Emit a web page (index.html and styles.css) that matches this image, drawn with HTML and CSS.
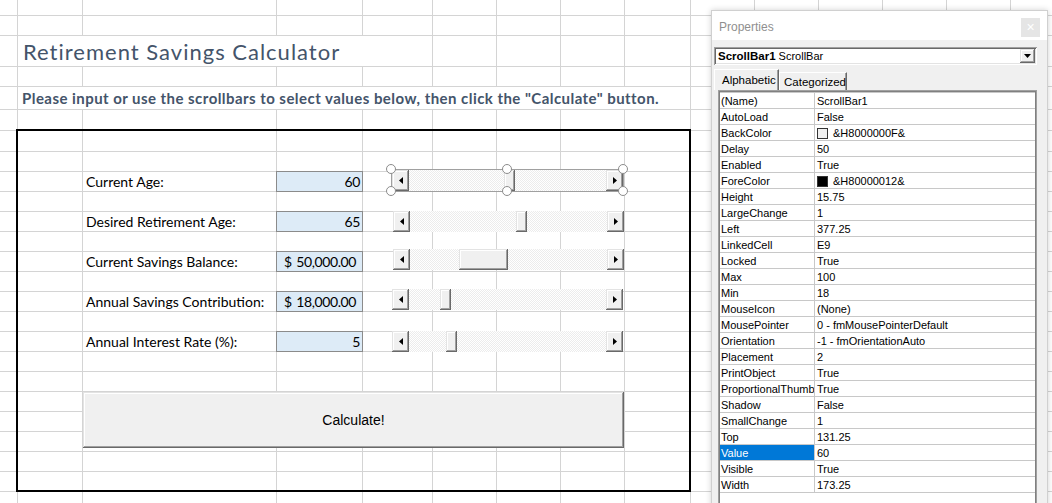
FILE: index.html
```html
<!DOCTYPE html>
<html lang="en">
<head>
<meta charset="utf-8">
<title>Retirement Savings Calculator</title>
<link rel="stylesheet" href="styles.css">
</head>
<body>
<div class="sheet">
  <h1 class="title">Retirement Savings Calculator</h1>
  <p class="instructions">Please input or use the scrollbars to select values below, then click the "Calculate" button.</p>
  <div class="frame"></div>

  <div class="label row-a">Current Age:</div>
  <div class="value row-a">60</div>
  <div class="label row-b">Desired Retirement Age:</div>
  <div class="value row-b">65</div>
  <div class="label row-c">Current Savings Balance:</div>
  <div class="value money row-c"><span>$</span><span>50,000.00</span></div>
  <div class="label row-d">Annual Savings Contribution:</div>
  <div class="value money row-d"><span>$</span><span>18,000.00</span></div>
  <div class="label row-e">Annual Interest Rate (%):</div>
  <div class="value row-e">5</div>

  <div class="sb sb-a selected">
    <div class="sb-btn"><svg width="4" height="7" viewBox="0 0 4 7"><path d="M4 0V7L0 3.5Z"/></svg></div>
    <div class="sb-track"><div class="sb-thumb" style="margin-left:95px"></div></div>
    <div class="sb-btn"><svg width="4" height="7" viewBox="0 0 4 7"><path d="M0 0V7L4 3.5Z"/></svg></div>
    <span class="handle h-tl"></span><span class="handle h-bl"></span>
    <span class="handle h-tm"></span><span class="handle h-bm"></span>
    <span class="handle h-tr"></span><span class="handle h-br"></span>
  </div>
  <div class="sb sb-b">
    <div class="sb-btn"><svg width="4" height="7" viewBox="0 0 4 7"><path d="M4 0V7L0 3.5Z"/></svg></div>
    <div class="sb-track"><div class="sb-thumb" style="margin-left:106px"></div></div>
    <div class="sb-btn"><svg width="4" height="7" viewBox="0 0 4 7"><path d="M0 0V7L4 3.5Z"/></svg></div>
  </div>
  <div class="sb sb-c">
    <div class="sb-btn"><svg width="4" height="7" viewBox="0 0 4 7"><path d="M4 0V7L0 3.5Z"/></svg></div>
    <div class="sb-track"><div class="sb-thumb wide" style="margin-left:49px"></div></div>
    <div class="sb-btn"><svg width="4" height="7" viewBox="0 0 4 7"><path d="M0 0V7L4 3.5Z"/></svg></div>
  </div>
  <div class="sb sb-d">
    <div class="sb-btn"><svg width="4" height="7" viewBox="0 0 4 7"><path d="M4 0V7L0 3.5Z"/></svg></div>
    <div class="sb-track"><div class="sb-thumb" style="margin-left:31px"></div></div>
    <div class="sb-btn"><svg width="4" height="7" viewBox="0 0 4 7"><path d="M0 0V7L4 3.5Z"/></svg></div>
  </div>
  <div class="sb sb-e">
    <div class="sb-btn"><svg width="4" height="7" viewBox="0 0 4 7"><path d="M4 0V7L0 3.5Z"/></svg></div>
    <div class="sb-track"><div class="sb-thumb" style="margin-left:37px"></div></div>
    <div class="sb-btn"><svg width="4" height="7" viewBox="0 0 4 7"><path d="M0 0V7L4 3.5Z"/></svg></div>
  </div>

  <button class="calc" type="button">Calculate!</button>

  <aside class="props">
    <header class="props-title">
      <span>Properties</span>
      <span class="close">×</span>
    </header>
    <div class="props-body">
      <div class="combo">
        <span class="combo-text"><b>ScrollBar1</b> ScrollBar</span>
        <span class="combo-btn"><svg width="7" height="4" viewBox="0 0 7 4"><path d="M0 0H7L3.5 4Z"/></svg></span>
      </div>
      <div class="tabs">
        <span class="tab active">Alphabetic</span>
        <span class="tab">Categorized</span>
      </div>
      <div class="pgrid">
        <span class="pn">(Name)</span><span class="pv">ScrollBar1</span>
        <span class="pn">AutoLoad</span><span class="pv">False</span>
        <span class="pn">BackColor</span><span class="pv"><i class="swatch light"></i>&amp;H8000000F&amp;</span>
        <span class="pn">Delay</span><span class="pv">50</span>
        <span class="pn">Enabled</span><span class="pv">True</span>
        <span class="pn">ForeColor</span><span class="pv"><i class="swatch dark"></i>&amp;H80000012&amp;</span>
        <span class="pn">Height</span><span class="pv">15.75</span>
        <span class="pn">LargeChange</span><span class="pv">1</span>
        <span class="pn">Left</span><span class="pv">377.25</span>
        <span class="pn">LinkedCell</span><span class="pv">E9</span>
        <span class="pn">Locked</span><span class="pv">True</span>
        <span class="pn">Max</span><span class="pv">100</span>
        <span class="pn">Min</span><span class="pv">18</span>
        <span class="pn">MouseIcon</span><span class="pv">(None)</span>
        <span class="pn">MousePointer</span><span class="pv">0 - fmMousePointerDefault</span>
        <span class="pn">Orientation</span><span class="pv">-1 - fmOrientationAuto</span>
        <span class="pn">Placement</span><span class="pv">2</span>
        <span class="pn">PrintObject</span><span class="pv">True</span>
        <span class="pn">ProportionalThumb</span><span class="pv">True</span>
        <span class="pn">Shadow</span><span class="pv">False</span>
        <span class="pn">SmallChange</span><span class="pv">1</span>
        <span class="pn">Top</span><span class="pv">131.25</span>
        <span class="pn sel">Value</span><span class="pv">60</span>
        <span class="pn">Visible</span><span class="pv">True</span>
        <span class="pn">Width</span><span class="pv">173.25</span>
      </div>
    </div>
  </aside>
</div>
</body>
</html>
```

FILE: styles.css
```css
* { box-sizing: border-box; }

html, body {
  margin: 0;
  padding: 0;
  background: #fff;
}

body {
  width: 1052px;
  height: 503px;
  overflow: hidden;
}

.sheet {
  --g: #d4d4d4;
  position: relative;
  width: 1052px;
  height: 503px;
  overflow: hidden;
  display: grid;
  grid-template-columns: 18px 65px 194px 86px 70px 64px 64px 64px 66px 64px 64px 64px 64px 64px 64px;
  grid-template-rows: 16px 20px 31px 20px 23px 21px 21px repeat(18, 20px);
  font-family: Lato, "Liberation Sans", sans-serif;
  color: #000;
  background-color: #fff;
  background:
    linear-gradient(var(--g), var(--g)) 17px 0 / 1px 100% no-repeat,
    linear-gradient(var(--g), var(--g)) 82px 0 / 1px 100% no-repeat,
    linear-gradient(var(--g), var(--g)) 276px 0 / 1px 100% no-repeat,
    linear-gradient(var(--g), var(--g)) 362px 0 / 1px 100% no-repeat,
    linear-gradient(var(--g), var(--g)) 432px 0 / 1px 100% no-repeat,
    repeating-linear-gradient(90deg, transparent 0 63px, var(--g) 63px 64px) 433px 0 / 192px 100% no-repeat,
    linear-gradient(var(--g), var(--g)) 690px 0 / 1px 100% no-repeat,
    repeating-linear-gradient(90deg, transparent 0 63px, var(--g) 63px 64px) 691px 0 / 384px 100% no-repeat,
    linear-gradient(var(--g), var(--g)) 0 15px / 100% 1px no-repeat,
    linear-gradient(var(--g), var(--g)) 0 35px / 100% 1px no-repeat,
    linear-gradient(var(--g), var(--g)) 0 66px / 100% 1px no-repeat,
    linear-gradient(var(--g), var(--g)) 0 86px / 100% 1px no-repeat,
    linear-gradient(var(--g), var(--g)) 0 109px / 100% 1px no-repeat,
    linear-gradient(var(--g), var(--g)) 0 130px / 100% 1px no-repeat,
    repeating-linear-gradient(transparent 0 19px, var(--g) 19px 20px) 0 132px / 100% 400px no-repeat,
    #fff;
}

/* ---------- cell text ---------- */
.title {
  grid-column: 2 / 6;
  grid-row: 3;
  margin: 0 1px 1px 0;
  padding: 0 0 1px 5px;
  background: #fff;
  display: flex;
  align-items: flex-end;
  font-size: 22px;
  font-weight: 400;
  letter-spacing: 1px;
  line-height: 26px;
  color: #44546a;
  white-space: nowrap;
}

.instructions {
  grid-column: 2 / 10;
  grid-row: 5;
  margin: 0 1px 1px 0;
  padding: 0 0 2px 4px;
  background: #fff;
  display: flex;
  align-items: flex-end;
  font-size: 15px;
  font-weight: 700;
  letter-spacing: 0.45px;
  line-height: 17px;
  color: #44546a;
  white-space: nowrap;
}

.frame {
  grid-column: 2 / 10;
  grid-row: 7 / 25;
  margin: -2px 0 0 -2px;
  border: 2px solid #000;
}

.row-a { grid-row: 9; }
.row-b { grid-row: 11; }
.row-c { grid-row: 13; }
.row-d { grid-row: 15; }
.row-e { grid-row: 17; }

.label {
  grid-column: 3;
  display: flex;
  align-items: flex-end;
  padding: 0 0 2px 3px;
  font-size: 14px;
  line-height: 17px;
  white-space: nowrap;
}

.value {
  grid-column: 4;
  margin: -1px 0 0 -1px;
  border: 1px solid #8b8b8b;
  background: #ddebf7;
  display: flex;
  align-items: flex-end;
  justify-content: flex-end;
  padding: 0 2px 1px 0;
  font-size: 14px;
  letter-spacing: -0.4px;
  line-height: 17px;
  white-space: nowrap;
}

.value.money {
  justify-content: space-between;
  padding: 0 6px 1px 7px;
}

/* ---------- ActiveX scrollbars ---------- */
.sb {
  position: absolute;
  width: 231px;
  height: 21px;
  display: flex;
}
.sb-a { left: 392px; top: 170px; }
.sb-b { left: 393px; top: 211px; }
.sb-c { left: 393px; top: 249px; }
.sb-d { left: 392px; top: 289px; }
.sb-e { left: 392px; top: 331px; }

.sb.selected { outline: 1px solid #a0a0a0; }

.sb-btn,
.sb-thumb,
.calc,
.combo-btn {
  background: #f0f0f0;
  box-shadow:
    inset -1px -1px #696969,
    inset 1px 1px #e3e3e3,
    inset -2px -2px #a0a0a0,
    inset 2px 2px #fff;
}

.sb-btn {
  flex: none;
  width: 17px;
  display: flex;
  align-items: center;
  justify-content: center;
}
.sb-btn svg { display: block; fill: #000; }

.sb-track {
  flex: 1;
  display: flex;
  background: repeating-conic-gradient(#ececec 0 25%, #fff 0 50%) 0 0 / 2px 2px;
}
.sb-thumb { flex: none; width: 11px; }
.sb-thumb.wide { width: 49px; }

.handle {
  position: absolute;
  width: 10px;
  height: 10px;
  border-radius: 50%;
  border: 1.5px solid #8c8c8c;
  background: #fff;
}
.h-tl { left: -6px; top: -6px; }
.h-bl { left: -6px; top: 16px; }
.h-tm { left: 110px; top: -6px; }
.h-bm { left: 110px; top: 16px; }
.h-tr { left: 226px; top: -6px; }
.h-br { left: 226px; top: 16px; }

/* ---------- button ---------- */
.calc {
  position: absolute;
  left: 83px;
  top: 392px;
  width: 541px;
  height: 56px;
  border: 0;
  padding: 0;
  font-family: "Liberation Sans", Arial, sans-serif;
  font-size: 14px;
  color: #000;
}

/* ---------- Properties window ---------- */
.props {
  position: absolute;
  left: 711px;
  top: 10px;
  width: 337px;
  height: 500px;
  border: 1px solid #d0d0d0;
  box-shadow: 0 0 6px rgba(0, 0, 0, 0.18);
  background: #f0f0f0;
  display: flex;
  flex-direction: column;
  font-family: "Liberation Sans", Arial, sans-serif;
  font-size: 11px;
  color: #000;
}

.props-title {
  flex: none;
  height: 29px;
  background: #fff;
  display: flex;
  align-items: flex-start;
  justify-content: space-between;
  padding: 0 7px 0 7px;
  font-size: 12px;
  color: #8f8f8f;
}
.props-title > span:first-child { padding-top: 9px; }

.close {
  margin-top: 7px;
  width: 19px;
  height: 19px;
  background: #e5e5e5;
  color: #fff;
  font-size: 14px;
  line-height: 18px;
  text-align: center;
}

.props-body {
  flex: 1;
  padding: 7px 0 0 2px;
  display: flex;
  flex-direction: column;
}

.combo {
  flex: none;
  width: 323px;
  height: 18px;
  background: #fff;
  display: flex;
  align-items: center;
  justify-content: space-between;
  padding: 2px 2px 2px 4px;
  box-shadow:
    inset 1px 1px #a0a0a0,
    inset -1px -1px #fff,
    inset 2px 2px #696969,
    inset -2px -2px #e3e3e3;
  font-size: 11px;
  white-space: nowrap;
}
.combo-text b { font-size: 11.5px; }
.combo-btn {
  width: 15px;
  height: 14px;
  display: flex;
  align-items: center;
  justify-content: center;
}
.combo-btn svg { display: block; fill: #000; }

.tabs {
  flex: none;
  margin-top: 4px;
  height: 21px;
  display: flex;
  align-items: flex-end;
}
.tab {
  height: 18px;
  padding: 0 5px;
  display: flex;
  align-items: center;
  border: 1px solid #fff;
  border-bottom: 0;
  border-right-color: #696969;
  box-shadow: inset -1px 0 #a0a0a0;
  font-size: 11.5px;
}
.tab.active {
  height: 21px;
  width: 65px;
  padding-left: 7px;
  position: relative;
  z-index: 1;
  background: #f0f0f0;
}
.tab:not(.active) { width: 68px; padding-left: 4px; }

.pgrid {
  flex: 1;
  margin-left: 4px;
  width: 319px;
  background: #fff;
  border: 1px solid #a0a0a0;
  box-shadow: inset 1px 1px #808080, inset -1px -1px #808080, inset 0 2px #c8c8c8;
  padding: 2px 1px 0 1px;
  display: grid;
  grid-template-columns: 95px 220px;
  grid-auto-rows: 16px;
  align-content: start;
}

.pn, .pv {
  border-bottom: 1px solid #c8c8c8;
  padding: 1px 0 0 1px;
  display: flex;
  align-items: center;
  white-space: nowrap;
  overflow: hidden;
  line-height: 14px;
}
.pn { border-right: 1px solid #c8c8c8; }
.pv { padding-left: 2px; }
.pn.sel { background: #0078d7; color: #fff; }

.swatch {
  display: inline-block;
  width: 11px;
  height: 11px;
  margin-right: 5px;
  border: 1px solid #333;
}
.swatch.light { background: #f0f0f0; }
.swatch.dark { background: #000; }
```
